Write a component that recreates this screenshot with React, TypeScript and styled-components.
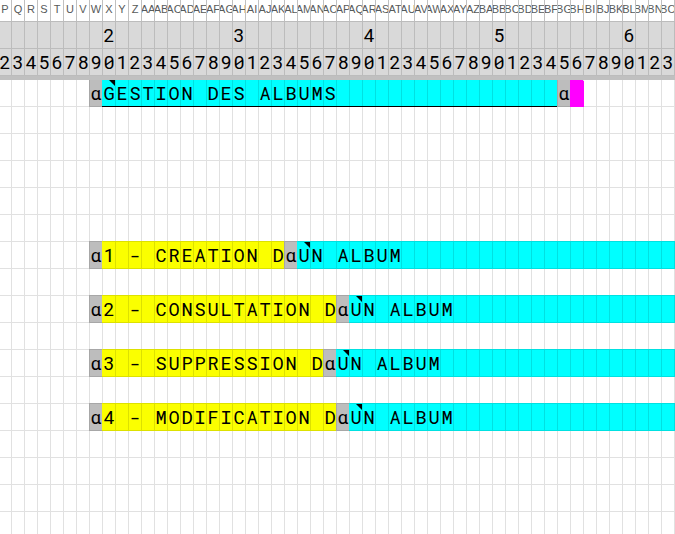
import React from "react";
import styled, { createGlobalStyle, css } from "styled-components";

const COLUMN_COUNT = 53;
const FIRST_COLUMN = 16;

const GlobalStyle = createGlobalStyle`
  *, *::before, *::after { box-sizing: border-box; }
  html, body { margin: 0; background: #fff; overflow: hidden; }
`;

const Sheet = styled.main`
  width: 675px;
  height: 534px;
  overflow: hidden;
  background: #fff;
  font-family: "Roboto Mono", Roboto, sans-serif;
`;

const Line = styled.div<{ $height: number }>`
  display: grid;
  grid-template-columns: repeat(${COLUMN_COUNT}, 13px);
  height: ${(p) => p.$height}px;
  margin-left: -2px;
`;

const ColumnLabel = styled.div`
  display: flex;
  align-items: flex-start;
  justify-content: center;
  overflow: hidden;
  border-left: 1px solid #c0c0c0;
  color: #575a5a;
  font: 11px/18px "Liberation Sans", Arial, sans-serif;
  white-space: nowrap;
`;

const cellText = css`
  display: flex;
  justify-content: center;
  color: #000;
  font-size: 18.67px;
  line-height: 26px;
  white-space: pre;
`;

const RulerCell = styled.div`
  ${cellText}
  border-left: 1px solid #bcbcbc;
  border-top: 1px solid #bcbcbc;
  background: #d9d9d9;
`;

const FrozenBar = styled.div`
  height: 5px;
  background: #c0c0c0;
  border-top: 1px solid #bcbcbc;
`;

type Tone = "none" | "marker" | "cyan" | "yellow" | "magenta";

const tones: Record<Tone, { fill: string; line: string }> = {
  none: { fill: "#ffffff", line: "#e1e1e1" },
  marker: { fill: "#bdbdbd", line: "#a7a7a7" },
  cyan: { fill: "#00ffff", line: "#00e1e1" },
  yellow: { fill: "#fbff00", line: "#dde100" },
  magenta: { fill: "#ff00ff", line: "#ff00ff" },
};

const Cell = styled.div<{ $tone: Tone; $first: boolean; $underlined: boolean; $flush: boolean }>`
  ${cellText}
  position: relative;
  z-index: ${(p) => (p.$tone === "none" ? 0 : 1)};
  border-left: 1px solid ${(p) => (p.$flush ? tones[p.$tone].fill : tones[p.$tone].line)};
  border-top: ${(p) => (p.$first ? "0" : `1px solid ${tones[p.$tone].line}`)};
  background: ${(p) => tones[p.$tone].fill};
  box-shadow: ${(p) =>
    p.$tone === "none"
      ? "none"
      : p.$tone === "magenta"
        ? "1px 1px 0 #ff00ff, 0 1px 0 #ff00ff"
        : `0 1px 0 ${p.$underlined ? "#000" : tones[p.$tone].line}`};
`;

const NoteCorner = styled.svg`
  position: absolute;
  top: 0;
  right: 0;
  width: 6px;
  height: 6px;
`;

interface Segment {
  start: number;
  end: number;
  tone: Tone;
  text?: string;
  note?: boolean;
  underlined?: boolean;
}

const option = (label: string): Segment[] => {
  const marker = 8 + label.length;
  return [
    { start: 7, end: 8, tone: "marker", text: "α" },
    { start: 8, end: marker, tone: "yellow", text: label },
    { start: marker, end: marker + 1, tone: "marker", text: "α" },
    { start: marker + 1, end: COLUMN_COUNT, tone: "cyan", text: "UN ALBUM", note: true },
  ];
};

const content: Record<number, Segment[]> = {
  0: [
    { start: 7, end: 8, tone: "marker", text: "α" },
    { start: 8, end: 43, tone: "cyan", text: "GESTION DES ALBUMS", note: true, underlined: true },
    { start: 43, end: 44, tone: "marker", text: "α" },
    { start: 44, end: 45, tone: "magenta" },
  ],
  6: option("1 - CREATION D"),
  8: option("2 - CONSULTATION D"),
  10: option("3 - SUPPRESSION D"),
  12: option("4 - MODIFICATION D"),
};

const columns = Array.from({ length: COLUMN_COUNT }, (_, i) => i);
const rows = Array.from({ length: 17 }, (_, i) => i);

const columnName = (n: number): string =>
  n <= 26
    ? String.fromCharCode(64 + n)
    : columnName(Math.floor((n - 1) / 26)) + String.fromCharCode(65 + ((n - 1) % 26));

function SheetRow({ index }: { index: number }) {
  const segments = content[index] ?? [];
  const first = index === 0;
  return (
    <Line $height={first ? 26 : 27}>
      {columns.map((c) => {
        const segment = segments.find((s) => c >= s.start && c < s.end);
        return (
          <Cell
            key={c}
            $tone={segment?.tone ?? "none"}
            $first={first}
            $underlined={Boolean(segment?.underlined)}
            $flush={Boolean(segment && c === segment.start && segment.tone !== "marker")}
          >
            {segment?.text?.[c - segment.start] ?? ""}
            {segment?.note && c === segment.start && (
              <NoteCorner viewBox="0 0 6 6">
                <path d="M0 0H6V6Z" fill="#000" />
              </NoteCorner>
            )}
          </Cell>
        );
      })}
    </Line>
  );
}

export default function App() {
  return (
    <Sheet>
      <GlobalStyle />
      <Line $height={21}>
        {columns.map((c) => (
          <ColumnLabel key={c}>{columnName(FIRST_COLUMN + c)}</ColumnLabel>
        ))}
      </Line>
      <Line $height={27}>
        {columns.map((c) => (
          <RulerCell key={c}>{c % 10 === 8 ? 2 + (c - 8) / 10 : ""}</RulerCell>
        ))}
      </Line>
      <Line $height={27}>
        {columns.map((c) => (
          <RulerCell key={c}>{(c + 2) % 10}</RulerCell>
        ))}
      </Line>
      <FrozenBar />
      {rows.map((r) => (
        <SheetRow key={r} index={r} />
      ))}
    </Sheet>
  );
}
